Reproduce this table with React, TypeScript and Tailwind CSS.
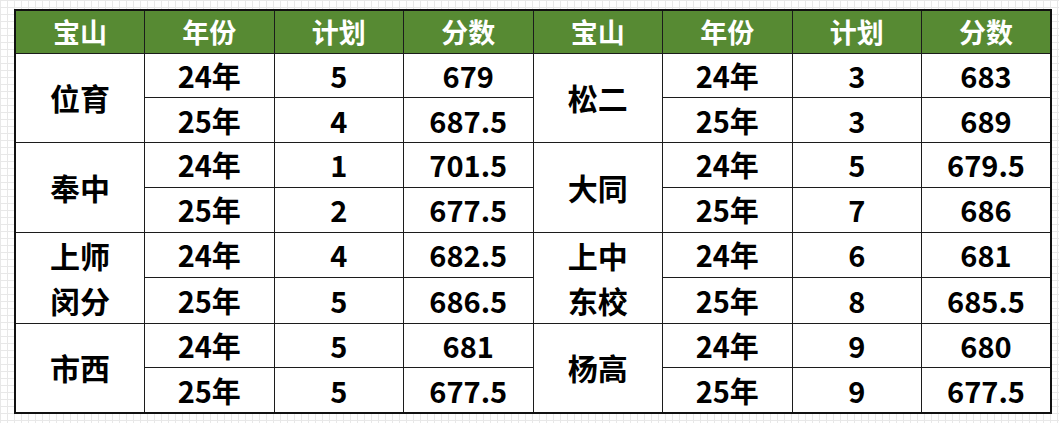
import React from 'react';

type Group = { name: string[]; rows: { year: string; plan: string; score: string }[] };

const left: Group[] = [
  { name: ['位育'], rows: [{ year: '24年', plan: '5', score: '679' }, { year: '25年', plan: '4', score: '687.5' }] },
  { name: ['奉中'], rows: [{ year: '24年', plan: '1', score: '701.5' }, { year: '25年', plan: '2', score: '677.5' }] },
  { name: ['上师', '闵分'], rows: [{ year: '24年', plan: '4', score: '682.5' }, { year: '25年', plan: '5', score: '686.5' }] },
  { name: ['市西'], rows: [{ year: '24年', plan: '5', score: '681' }, { year: '25年', plan: '5', score: '677.5' }] },
];

const right: Group[] = [
  { name: ['松二'], rows: [{ year: '24年', plan: '3', score: '683' }, { year: '25年', plan: '3', score: '689' }] },
  { name: ['大同'], rows: [{ year: '24年', plan: '5', score: '679.5' }, { year: '25年', plan: '7', score: '686' }] },
  { name: ['上中', '东校'], rows: [{ year: '24年', plan: '6', score: '681' }, { year: '25年', plan: '8', score: '685.5' }] },
  { name: ['杨高'], rows: [{ year: '24年', plan: '9', score: '680' }, { year: '25年', plan: '9', score: '677.5' }] },
];

const headers = ['宝山', '年份', '计划', '分数', '宝山', '年份', '计划', '分数'];

const td = 'border-[1.5px] border-[#1c1c1c] text-center align-middle p-0';

export default function App() {
  return (
    <div
      className="w-[1059px] h-[423px] bg-white bg-[linear-gradient(to_right,#e8e8e8_1px,transparent_1px),linear-gradient(to_bottom,#e8e8e8_1px,transparent_1px)] bg-[size:7px_7px] pl-[14px] pt-[9px]"
      style={{ fontFamily: '"Noto Sans CJK SC", "Noto Sans", sans-serif' }}
    >
      <table className="table-fixed border-collapse border-2 border-[#111] bg-white w-[1036px] font-bold text-black">
        <colgroup>
          {headers.map((_, i) => (
            <col key={i} className="w-[129.5px]" />
          ))}
        </colgroup>
        <thead>
          <tr className="h-[43px] bg-[#578a33]">
            {headers.map((h, i) => (
              <th key={i} className={`${td} text-white text-[27px] leading-none`}>
                {h}
              </th>
            ))}
          </tr>
        </thead>
        <tbody>
          {left.map((g, gi) =>
            g.rows.map((r, ri) => {
              const rg = right[gi];
              const rr = rg.rows[ri];
              return (
                <tr key={`${gi}-${ri}`} className="h-[44.8px] text-[29px] leading-none">
                  {ri === 0 && (
                    <td rowSpan={2} className={`${td} text-[30px] leading-[45px]`}>
                      {g.name.map((n) => (
                        <div key={n}>{n}</div>
                      ))}
                    </td>
                  )}
                  <td className={td}>{r.year}</td>
                  <td className={td}>{r.plan}</td>
                  <td className={td}>{r.score}</td>
                  {ri === 0 && (
                    <td rowSpan={2} className={`${td} text-[30px] leading-[45px]`}>
                      {rg.name.map((n) => (
                        <div key={n}>{n}</div>
                      ))}
                    </td>
                  )}
                  <td className={td}>{rr.year}</td>
                  <td className={td}>{rr.plan}</td>
                  <td className={td}>{rr.score}</td>
                </tr>
              );
            })
          )}
        </tbody>
      </table>
    </div>
  );
}
